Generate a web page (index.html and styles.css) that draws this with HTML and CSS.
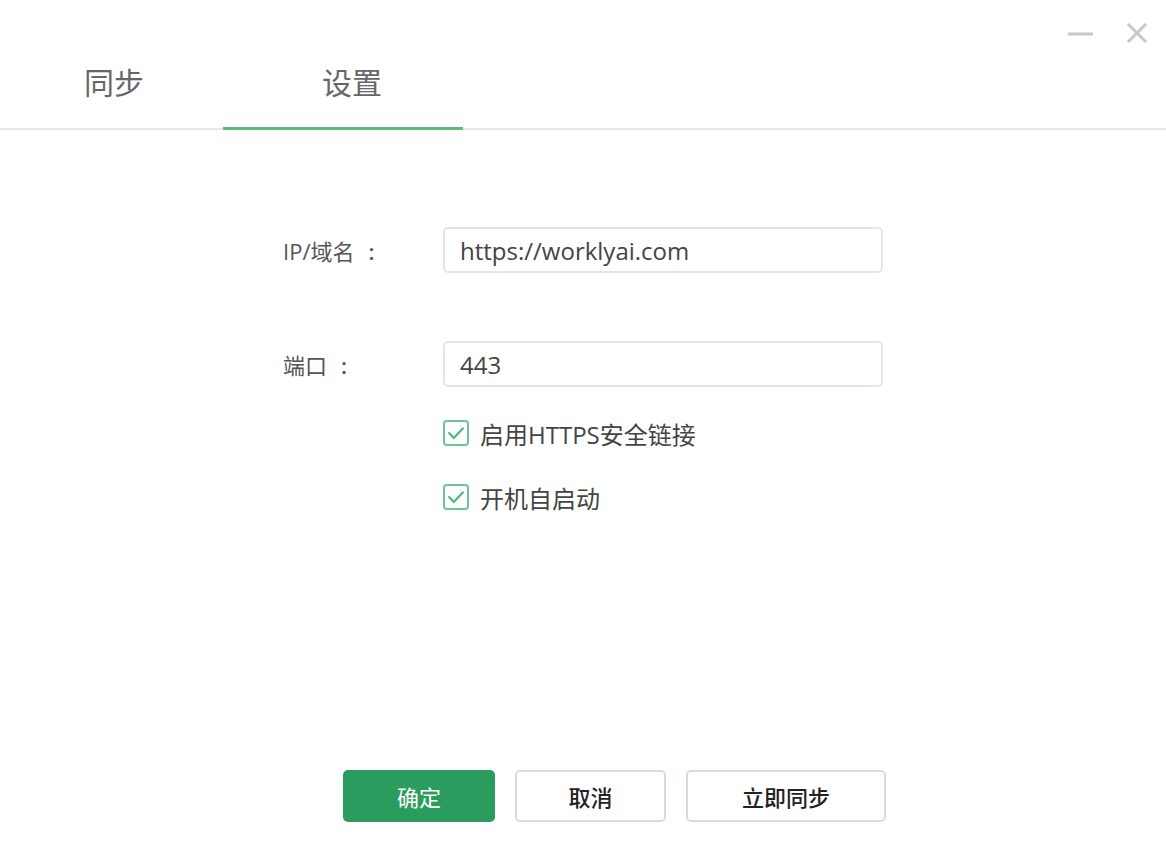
FILE: index.html
```html
<!DOCTYPE html>
<html lang="zh-CN">
<head>
<meta charset="utf-8">
<title>设置</title>
<link rel="stylesheet" href="styles.css">
</head>
<body>
<div class="window">
  <header class="header">
    <nav class="tabs">
      <div class="tab tab-sync">同步</div>
      <div class="tab tab-settings active">设置</div>
    </nav>
    <div class="controls">
      <span class="ctl ctl-min" aria-label="最小化">
        <svg width="26" height="4" viewBox="0 0 26 4"><rect x="0" y="0.5" width="25" height="3" fill="#c4c7cc"/></svg>
      </span>
      <span class="ctl ctl-close" aria-label="关闭">
        <svg width="22" height="22" viewBox="0 0 22 22"><path d="M2 2 L20 20 M20 2 L2 20" stroke="#c4c7cc" stroke-width="3" fill="none"/></svg>
      </span>
    </div>
  </header>

  <main class="form">
    <div class="row row-host">
      <label class="label">IP/域名<span class="colon">:</span></label>
      <div class="input">https://worklyai.com</div>
    </div>
    <div class="row row-port">
      <label class="label">端口<span class="colon">:</span></label>
      <div class="input">443</div>
    </div>
    <div class="checks">
      <div class="check">
        <span class="box"><svg width="18" height="14" viewBox="0 0 18 14"><path d="M1.5 6.5 L6.8 12 L16.5 1.8" stroke="#4cb87a" stroke-width="2.2" fill="none"/></svg></span>
        <span class="check-text">启用HTTPS安全链接</span>
      </div>
      <div class="check">
        <span class="box"><svg width="18" height="14" viewBox="0 0 18 14"><path d="M1.5 6.5 L6.8 12 L16.5 1.8" stroke="#4cb87a" stroke-width="2.2" fill="none"/></svg></span>
        <span class="check-text">开机自启动</span>
      </div>
    </div>
  </main>

  <footer class="actions">
    <button class="btn btn-primary">确定</button>
    <button class="btn btn-cancel">取消</button>
    <button class="btn btn-sync">立即同步</button>
  </footer>
</div>
</body>
</html>
```

FILE: styles.css
```css
* { box-sizing: border-box; }
html, body {
  margin: 0;
  padding: 0;
  background: #ffffff;
}
body {
  font-family: "Open Sans", "Noto Sans CJK SC", sans-serif;
  color: #333;
}
.window {
  width: 1166px;
  height: 856px;
  display: flex;
  flex-direction: column;
}
.header {
  position: relative;
  height: 130px;
  border-bottom: 2px solid #e8e8e8;
}
.tabs {
  display: flex;
  height: 128px;
}
.tab {
  font-family: "Noto Sans CJK SC", sans-serif;
  font-size: 30px;
  color: #666;
  line-height: 1;
  padding-top: 66px;
  height: 130px;
}
.tab-sync {
  width: 223px;
  padding-left: 84px;
}
.tab-settings {
  width: 240px;
  padding-left: 99px;
  border-bottom: 3px solid #5cbb80;
}
.controls {
  position: absolute;
  top: 22px;
  right: 18px;
  display: flex;
  align-items: center;
  gap: 32px;
}
.ctl { display: flex; }
.ctl-min { padding-top: 2px; }

.form {
  padding-top: 97px;
  padding-left: 283px;
}
.row {
  display: flex;
  align-items: center;
  height: 46px;
}
.row-port { margin-top: 68px; }
.label {
  width: 160px;
  font-size: 22px;
  color: #555;
}
.colon {
  margin-left: 14px;
  font-weight: 600;
}
.input {
  width: 440px;
  height: 46px;
  border: 2px solid #e3e5ea;
  border-radius: 5px;
  padding: 0 15px;
  font-size: 24px;
  color: #444;
  display: flex;
  align-items: center;
}
.checks {
  padding-left: 160px;
  padding-top: 33px;
  display: flex;
  flex-direction: column;
  gap: 38px;
}
.check {
  display: flex;
  align-items: center;
  height: 26px;
}
.box {
  width: 26px;
  height: 26px;
  border: 2px solid #6cc594;
  border-radius: 4px;
  display: flex;
  align-items: center;
  justify-content: center;
  margin-right: 11px;
}
.check-text {
  font-size: 24px;
  color: #444;
}

.actions {
  margin-top: auto;
  padding-bottom: 34px;
  padding-left: 343px;
  display: flex;
  gap: 20px;
}
.btn {
  height: 52px;
  font-family: "Noto Sans CJK SC", sans-serif;
  font-size: 22px;
  border-radius: 5px;
  cursor: pointer;
  padding: 0;
}
.btn-primary {
  width: 152px;
  background: #2a9c5e;
  border: none;
  color: #ffffff;
}
.btn-cancel {
  width: 151px;
  background: #fff;
  border: 2px solid #d6dbe8;
  color: #222;
  font-weight: 500;
}
.btn-sync {
  width: 200px;
  background: #fff;
  border: 2px solid #d6dbe8;
  color: #222;
  font-weight: 500;
}
```
